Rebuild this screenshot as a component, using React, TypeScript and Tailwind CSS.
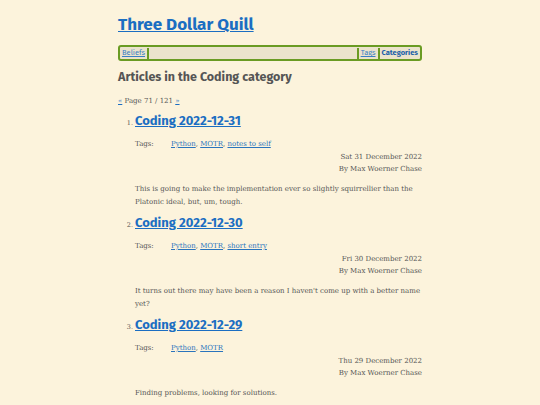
const posts = [
  {
    title: "Coding 2022-12-31",
    tags: ["Python", "MOTR", "notes to self"],
    date: "Sat 31 December 2022",
    body: "This is going to make the implementation ever so slightly squirrellier than the Platonic ideal, but, um, tough.",
  },
  {
    title: "Coding 2022-12-30",
    tags: ["Python", "MOTR", "short entry"],
    date: "Fri 30 December 2022",
    body: "It turns out there may have been a reason I haven't come up with a better name yet?",
  },
  {
    title: "Coding 2022-12-29",
    tags: ["Python", "MOTR"],
    date: "Thu 29 December 2022",
    body: "Finding problems, looking for solutions.",
  },
]

const sans = "font-['Fira_Sans','Noto_Sans',sans-serif]"
const serif = "font-['DejaVu_Serif',serif]"

export default function App() {
  return (
    <div className={`min-h-[405px] bg-[#fcf3dc] ${serif} text-[#555]`}>
      <div className="w-[304px] mx-auto pt-[14px]">
        <h1 className={`${sans} text-[17px] font-bold leading-[22px] text-[#1b6ec2] underline`}>
          Three Dollar Quill
        </h1>

        {/* nav bar */}
        <nav className={`${sans} mt-[9px] flex items-center h-[16px] border-2 border-[#6a9b23] rounded-[3px] bg-[#ebe3cc] text-[7.5px] leading-none`}>
          <a className="px-[2px] text-[#3a7fc4] underline">Beliefs</a>
          <span className="w-[2px] h-[11px] bg-[#6a9b23]" />
          <span className="flex-1" />
          <span className="w-[2px] h-[11px] bg-[#6a9b23]" />
          <a className="px-[2px] text-[#3a7fc4] underline">Tags</a>
          <span className="w-[2px] h-[11px] bg-[#6a9b23]" />
          <a className="px-[2px] font-bold text-[#1b5fa8]">Categories</a>
        </nav>

        <h2 className={`${sans} mt-[8px] text-[12.5px] font-bold leading-[16px] text-[#555]`}>
          Articles in the Coding category
        </h2>

        <p className="mt-[11px] text-[7px] leading-[10px]">
          <a className="text-[#1b6ec2] underline">«</a> Page 71 / 121{" "}
          <a className="text-[#1b6ec2] underline">»</a>
        </p>

        <ol className="mt-[6px] pl-[17px]">
          {posts.map((p, i) => (
            <li key={i} className="mb-[5px]">
              <div className="flex items-baseline">
                <span className="w-[7px] -ml-[9px] mr-[2px] text-right text-[6.5px]">{i + 1}.</span>
                <a className={`${sans} text-[13px] font-bold leading-[18px] text-[#1b6ec2] underline`}>
                  {p.title}
                </a>
              </div>
              <div className="mt-[8px] flex text-[7px] leading-[13px]">
                <span className="w-[36px]">Tags:</span>
                <span>
                  {p.tags.map((t, j) => (
                    <span key={t}>
                      <a className="text-[#2a74bd] underline">{t}</a>
                      {j < p.tags.length - 1 ? ", " : ""}
                    </span>
                  ))}
                </span>
              </div>
              <div className="text-right text-[7px] leading-[12px]">
                <div>{p.date}</div>
                <div>By Max Woerner Chase</div>
              </div>
              <p className="mt-[8px] text-[7px] leading-[13px]">{p.body}</p>
            </li>
          ))}
        </ol>
      </div>
    </div>
  )
}
